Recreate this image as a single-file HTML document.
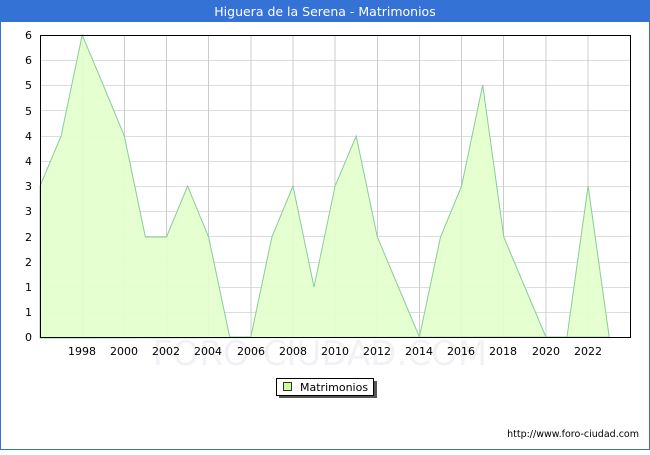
<!DOCTYPE html>
<html><head><meta charset="utf-8"><style>
html,body{margin:0;padding:0;background:#fff;}
body{width:650px;height:450px;overflow:hidden;}
text{font-family:"DejaVu Sans","Liberation Sans",sans-serif;}
</style></head><body>
<svg width="650" height="450" xmlns="http://www.w3.org/2000/svg">
<rect x="0.5" y="0.5" width="649" height="449" fill="#fff" stroke="#3572d6"/>
<rect x="0" y="0" width="650" height="22" fill="#3572d6"/>
<text x="325" y="16" fill="#fff" font-size="12.5" text-anchor="middle">Higuera de la Serena - Matrimonios</text>
<text x="320" y="365" fill="#f2f2f6" font-size="34" text-anchor="middle">FORO-CIUDAD.COM</text>
<g stroke="#dddddd" stroke-width="1">
<line x1="40" x2="631" y1="60.5" y2="60.5"/><line x1="40" x2="631" y1="85.5" y2="85.5"/>
<line x1="40" x2="631" y1="110.5" y2="110.5"/><line x1="40" x2="631" y1="136.5" y2="136.5"/>
<line x1="40" x2="631" y1="161.5" y2="161.5"/><line x1="40" x2="631" y1="186.5" y2="186.5"/>
<line x1="40" x2="631" y1="211.5" y2="211.5"/><line x1="40" x2="631" y1="236.5" y2="236.5"/>
<line x1="40" x2="631" y1="262.5" y2="262.5"/><line x1="40" x2="631" y1="287.5" y2="287.5"/>
<line x1="40" x2="631" y1="312.5" y2="312.5"/>
</g>
<g stroke="#cccccc" stroke-width="1">
<line y1="35" y2="338" x1="82.5" x2="82.5"/><line y1="35" y2="338" x1="124.5" x2="124.5"/>
<line y1="35" y2="338" x1="166.5" x2="166.5"/><line y1="35" y2="338" x1="208.5" x2="208.5"/>
<line y1="35" y2="338" x1="251" x2="251"/><line y1="35" y2="338" x1="293" x2="293"/>
<line y1="35" y2="338" x1="335" x2="335"/><line y1="35" y2="338" x1="377.5" x2="377.5"/>
<line y1="35" y2="338" x1="419.5" x2="419.5"/><line y1="35" y2="338" x1="461.5" x2="461.5"/>
<line y1="35" y2="338" x1="503.5" x2="503.5"/><line y1="35" y2="338" x1="546" x2="546"/>
<line y1="35" y2="338" x1="588" x2="588"/>
</g>
<polygon fill="#e4ffcc" fill-opacity="0.92" stroke="#88cc99" stroke-width="1" points="40,338 40,186 61.1,136 82.2,35 103.2,85 124.3,136 145.4,237 166.5,237 187.6,186 208.6,237 229.7,337 250.8,337 271.9,237 293,186 314,287 335.1,186 356.2,136 377.3,237 398.4,287 419.4,337 440.5,237 461.6,186 482.7,85 503.8,237 524.8,287 545.9,337 567,337 588.1,186 609.2,337"/>
<rect x="40.5" y="35.5" width="590" height="302" fill="none" stroke="#000" stroke-width="1"/>
<g font-size="11" fill="#000" text-anchor="end">
<text x="32" y="39">6</text><text x="32" y="64">6</text><text x="32" y="89">5</text>
<text x="32" y="115">5</text><text x="32" y="140">4</text><text x="32" y="165">4</text>
<text x="32" y="190">3</text><text x="32" y="215">3</text><text x="32" y="241">2</text>
<text x="32" y="266">2</text><text x="32" y="291">1</text><text x="32" y="316">1</text>
<text x="32" y="341">0</text>
</g>
<g font-size="11" fill="#000" text-anchor="middle">
<text x="82" y="355">1998</text><text x="124" y="355">2000</text><text x="166" y="355">2002</text>
<text x="208" y="355">2004</text><text x="251" y="355">2006</text><text x="293" y="355">2008</text>
<text x="335" y="355">2010</text><text x="377" y="355">2012</text><text x="419" y="355">2014</text>
<text x="461" y="355">2016</text><text x="503" y="355">2018</text><text x="546" y="355">2020</text>
<text x="588" y="355">2022</text>
</g>
<rect x="279" y="381" width="98" height="17" fill="#555"/>
<rect x="276.5" y="378.5" width="97" height="17" fill="#fff" stroke="#000"/>
<rect x="283.5" y="382.5" width="8" height="8" fill="#ccff99" stroke="#000" stroke-width="0.8"/>
<text x="300" y="391" font-size="11" fill="#000">Matrimonios</text>
<text x="639" y="437" font-size="9.5" fill="#000" text-anchor="end">http://www.foro-ciudad.com</text>
</svg>
</body></html>
